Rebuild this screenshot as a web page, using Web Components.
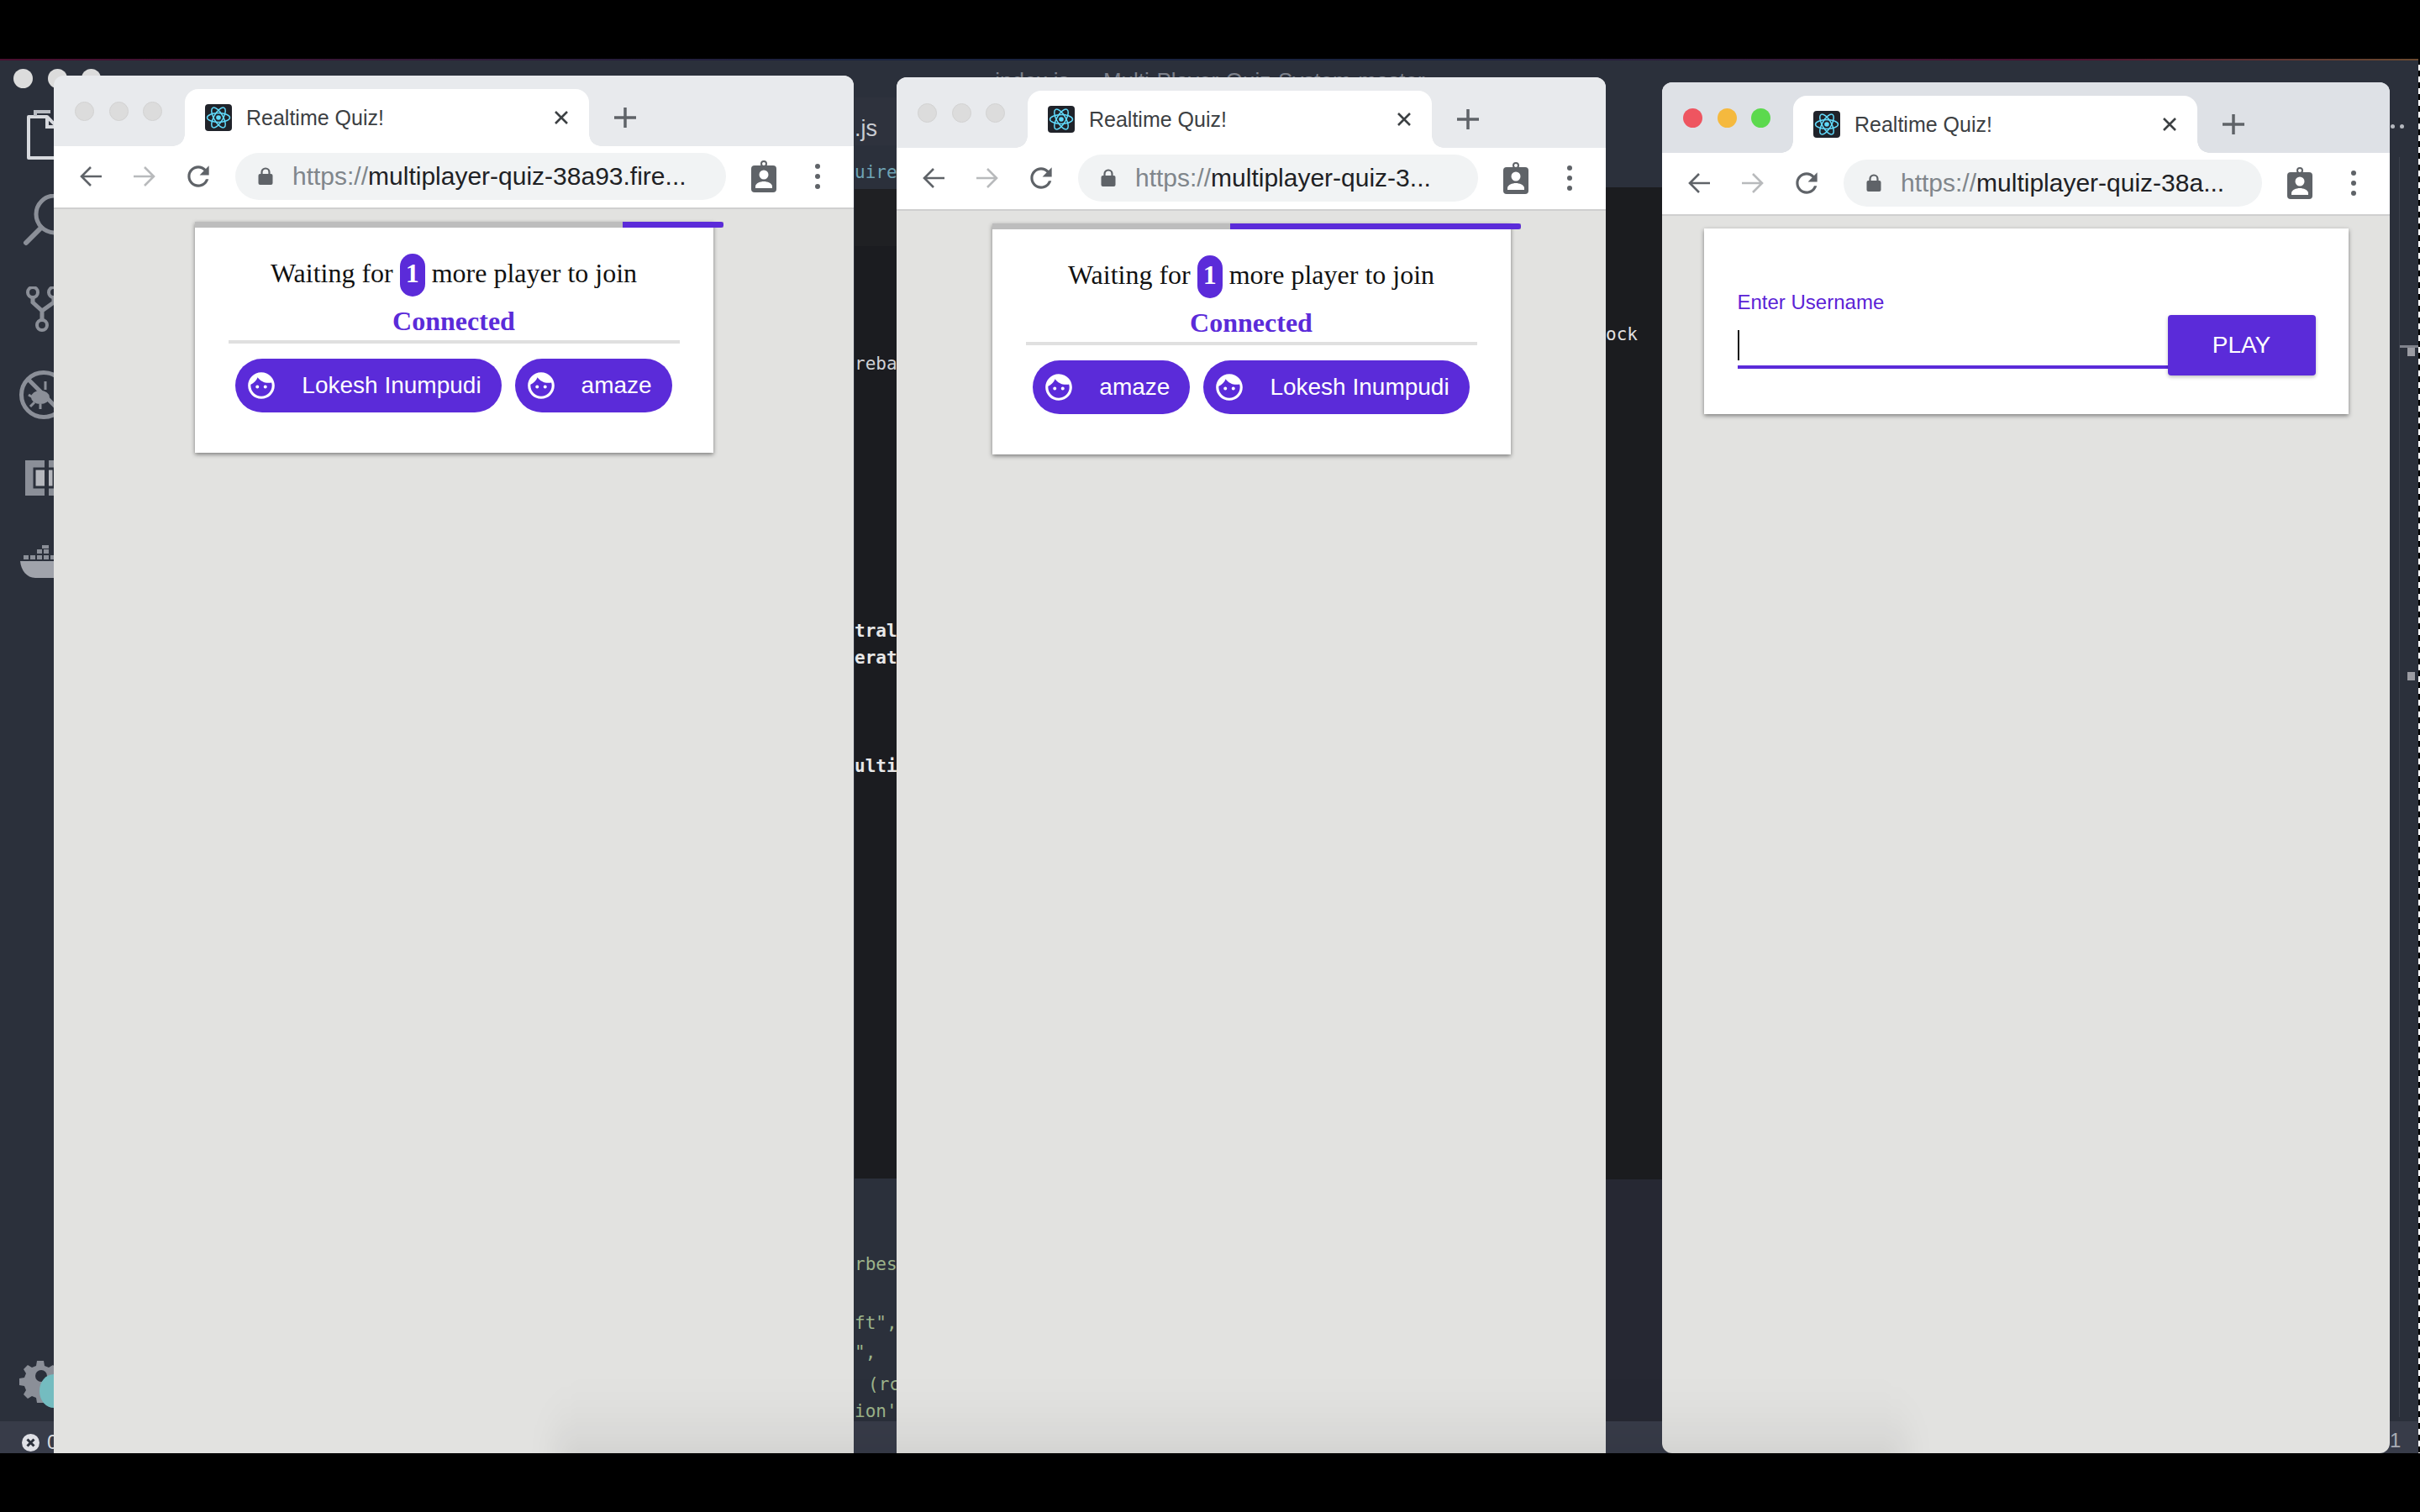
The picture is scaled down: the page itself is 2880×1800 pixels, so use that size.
<!DOCTYPE html>
<html>
<head>
<meta charset="utf-8">
<title>Realtime Quiz!</title>
<style>
    html, body { margin: 0; padding: 0; background: #000; }
</style>
</head>
<body>
<screen-frame>
    <editor-backdrop>
        <editor-activity slot="activity"></editor-activity>

        <editor-sliver slot="gap1" style="--bands: linear-gradient(#2b303b 0 46px, #2e323d 46px 103px, #2b303b 103px 155px, #1f2023 155px 223px, #1b1c20 223px 1333px, #2b303b 1333px)">
            <code-frag gap="68" sans color="#c9ccd2">.js</code-frag>
            <code-frag gap="22" color="#6fa3b4">uire</code-frag>
            <code-frag gap="198" color="#cfd1d6">reba</code-frag>
            <code-frag gap="288" color="#e8e8e8" bold>tral</code-frag>
            <code-frag gap="2" color="#e8e8e8" bold>erat</code-frag>
            <code-frag gap="99" color="#e8e8e8" bold>ulti</code-frag>
            <code-frag gap="563" color="#9cb38a">rbes</code-frag>
            <code-frag gap="40" color="#9cb38a">ft",</code-frag>
            <code-frag gap="5" color="#9cb38a">",</code-frag>
            <code-frag gap="8" color="#9cb38a" indent="16">(rc</code-frag>
            <code-frag gap="2" color="#9cb38a">ion'</code-frag>
        </editor-sliver>

        <editor-sliver slot="gap2" style="--bands: linear-gradient(#2b303b 0 153px, #1b1c1f 153px 1334px, #262833 1334px)">
            <code-frag gap="313" color="#e0e0e0">ock</code-frag>
        </editor-sliver>

        <editor-minimap slot="minimap"></editor-minimap>
    </editor-backdrop>

    <browser-window style="left:64px;top:20px;width:952px" url="multiplayer-quiz-38a93.fire...">
        <lobby-card progress="19">
            <player-chip>Lokesh Inumpudi</player-chip>
            <player-chip>amaze</player-chip>
        </lobby-card>
    </browser-window>

    <browser-window style="left:1067px;top:22px;width:844px" url="multiplayer-quiz-3...">
        <lobby-card progress="55">
            <player-chip>amaze</player-chip>
            <player-chip>Lokesh Inumpudi</player-chip>
        </lobby-card>
    </browser-window>

    <browser-window style="left:1978px;top:28px;width:866px;--bottom-radius:12px" url="multiplayer-quiz-38a..." focused>
        <login-card></login-card>
    </browser-window>
</screen-frame>

<script>
/** Screen: black bars above and below, the desktop between them */
const screenFrameTemplate = document.createElement("template");
screenFrameTemplate.innerHTML = `
    <style>
        :host {
            display: block;
            width: 2880px;
            height: 1800px;
            padding-top: 70px;
            box-sizing: border-box;
            background: #000;
            font-family: "Liberation Sans", Arial, sans-serif;
        }
        .desktop {
            position: relative;
            width: 2880px;
            height: 1660px;
            overflow: hidden;
            background: #2b303b;
        }
        .edge {
            position: absolute;
            left: 0;
            right: 0;
            top: 0;
            height: 2px;
            z-index: 3;
            background: linear-gradient(90deg, #4a1030, #1a2340 35%, #1a2340 60%, #4a1030 85%, #6a4a30);
        }
        .dock-shade {
            position: absolute;
            left: 660px;
            width: 1610px;
            top: 1575px;
            height: 130px;
            border-radius: 50px;
            background: linear-gradient(transparent, rgba(0, 0, 0, 0.02) 35%, rgba(0, 0, 0, 0.075) 75%);
            filter: blur(16px);
            z-index: 2;
            pointer-events: none;
        }
        .stripe {
            position: absolute;
            right: 0;
            top: 0;
            bottom: 0;
            width: 2px;
            z-index: 3;
            background: repeating-linear-gradient(#000 0 7px, #fff 7px 14px);
        }
    </style>
    <div class="desktop">
        <slot></slot>
        <div class="edge"></div>
        <div class="dock-shade"></div>
        <div class="stripe"></div>
    </div>
`;

class ScreenFrame extends HTMLElement {
    constructor() {
        super();
        this.attachShadow({ mode: "open" });
        this.shadowRoot.append(screenFrameTemplate.content.cloneNode(true));
    }
}

/** Code editor behind the browser windows, only its slivers show */
const editorBackdropTemplate = document.createElement("template");
editorBackdropTemplate.innerHTML = `
    <style>
        :host {
            display: grid;
            grid-template-columns: 64px 953px 50px 844px 67px 866px 36px;
            height: 1660px;
        }
        .title {
            position: absolute;
            left: 0;
            right: 0;
            top: 11px;
            text-align: center;
            font-size: 26px;
            line-height: 30px;
            color: #7d818b;
        }
        .lights {
            position: absolute;
            left: 16px;
            top: 12px;
            display: flex;
            gap: 17.5px;
        }
        .lights i {
            width: 23px;
            height: 23px;
            border-radius: 50%;
            background: #dcdcdc;
        }
        .status {
            position: absolute;
            left: 0;
            right: 0;
            top: 1622px;
            height: 38px;
            background: #383c49;
        }
        .col { position: relative; z-index: 1; min-width: 0; }
    </style>
    <div class="status"></div>
    <div class="title">index.js — Multi-Player-Quiz-System-master</div>
    <div class="lights"><i></i><i></i><i></i></div>
    <div class="col"><slot name="activity"></slot></div>
    <div class="col"></div>
    <div class="col"><slot name="gap1"></slot></div>
    <div class="col"></div>
    <div class="col"><slot name="gap2"></slot></div>
    <div class="col"></div>
    <div class="col"><slot name="minimap"></slot></div>
`;

class EditorBackdrop extends HTMLElement {
    constructor() {
        super();
        this.attachShadow({ mode: "open" });
        this.shadowRoot.append(editorBackdropTemplate.content.cloneNode(true));
    }
}

/** Left icon column of the editor, the window covers most of it */
const editorActivityTemplate = document.createElement("template");
editorActivityTemplate.innerHTML = `
    <style>
        :host {
            display: flex;
            flex-direction: column;
            width: 64px;
            height: 1660px;
            padding-top: 48px;
            box-sizing: border-box;
            overflow: hidden;
        }
        svg { display: block; flex: none; width: 64px; }
        .status {
            margin-top: auto;
            height: 38px;
            display: flex;
            align-items: center;
            gap: 9px;
            padding: 12px 0 0 26px;
            box-sizing: border-box;
            font-size: 24px;
            color: #d7d9de;
            background: #383c49;
        }
        .status svg { width: 21px; }
    </style>
    <svg viewBox="0 0 64 60" height="60" style="margin-top:12px">
        <path d="M34 9h22l12 12v37H34z" fill="none" stroke="#d7d9de" stroke-width="4" stroke-linejoin="round"/>
        <path d="M42 8V3h18" fill="none" stroke="#b9bcc3" stroke-width="4"/>
        <path d="M56 9v12h12" fill="none" stroke="#d7d9de" stroke-width="4"/>
    </svg>
    <svg viewBox="0 0 64 62" height="62" style="margin-top:41px">
        <circle cx="65" cy="24" r="22" fill="none" stroke="#8b8f98" stroke-width="5"/>
        <path d="M49 40L31 58" stroke="#8b8f98" stroke-width="6" stroke-linecap="round"/>
    </svg>
    <svg viewBox="0 0 64 54" height="54" style="margin-top:48px">
        <circle cx="39" cy="7" r="6" fill="none" stroke="#8b8f98" stroke-width="4"/>
        <circle cx="64" cy="7" r="6" fill="none" stroke="#8b8f98" stroke-width="4"/>
        <circle cx="50" cy="46" r="6" fill="none" stroke="#8b8f98" stroke-width="4"/>
        <path d="M39 13v6l11 10v11M64 13v6L50 29" fill="none" stroke="#8b8f98" stroke-width="5"/>
    </svg>
    <svg viewBox="0 0 64 60" height="60" style="margin-top:45px">
        <circle cx="52" cy="30" r="26.5" fill="none" stroke="#8b8f98" stroke-width="5"/>
        <path d="M33 11L71 49" stroke="#8b8f98" stroke-width="5"/>
        <ellipse cx="48" cy="33" rx="11" ry="8" fill="#8b8f98"/>
        <path d="M34 30l5 3M36 44l5-5M48 47v-6M54 14v10" stroke="#8b8f98" stroke-width="3" fill="none"/>
    </svg>
    <svg viewBox="0 0 64 44" height="44" style="margin-top:47px">
        <rect x="30" y="1" width="34" height="42" fill="#8b8f98"/>
        <rect x="41" y="11" width="23" height="22" fill="#b5b7bd" stroke="#2b303b" stroke-width="3"/>
        <rect x="53" y="0" width="5" height="44" fill="#2b303b"/>
    </svg>
    <svg viewBox="0 0 64 40" height="40" style="margin-top:58px">
        <path d="M24 19h40v20H42C32 39 25 30 24 19z" fill="#a0a3ab"/>
        <path d="M28 12h6v5h-6zM36 12h6v5h-6zM44 12h6v5h-6zM52 12h6v5h-6zM44 5h6v5h-6zM52 5h6v5h-6zM50 0h8v4h-8zM60 12h4v5h-4z" fill="#8b8f98"/>
    </svg>
    <svg viewBox="0 0 64 60" height="60" style="margin-top:auto">
        <path d="M44 2h8l1 6 5 2 5-3 5 5-3 5 2 5 6 1v8l-6 1-2 5 3 5-5 5-5-3-5 2-1 6h-8l-1-6-5-2-5 3-5-5 3-5-2-5-6-1v-8l6-1 2-5-3-5 5-5 5 3 5-2z" fill="#8b8f98"/>
        <circle cx="49" cy="20" r="7" fill="#2b303b"/>
        <ellipse cx="64" cy="38" rx="17" ry="20" fill="#74bcc0"/>
    </svg>
    <div class="status" style="margin-top:14px">
        <svg viewBox="0 0 21 21" height="21">
            <circle cx="10.5" cy="10.5" r="10.5" fill="#dfe0e6"/>
            <path d="M6.5 6.5l8 8M14.5 6.5l-8 8" stroke="#2b303b" stroke-width="3"/>
        </svg>
        <span>0</span>
    </div>
`;

class EditorActivity extends HTMLElement {
    constructor() {
        super();
        this.attachShadow({ mode: "open" });
        this.shadowRoot.append(editorActivityTemplate.content.cloneNode(true));
    }
}

/** A strip of the editor seen between two windows */
const editorSliverTemplate = document.createElement("template");
editorSliverTemplate.innerHTML = `
    <style>
        :host {
            display: flex;
            flex-direction: column;
            height: 1622px;
            overflow: hidden;
            background: var(--bands, #1b1c20);
            box-sizing: border-box;
        }
    </style>
    <slot></slot>
`;

class EditorSliver extends HTMLElement {
    constructor() {
        super();
        this.attachShadow({ mode: "open" });
        this.shadowRoot.append(editorSliverTemplate.content.cloneNode(true));
    }
}

/** One visible piece of a code line */
const codeFragTemplate = document.createElement("template");
codeFragTemplate.innerHTML = `
    <style>
        :host {
            display: block;
            flex: none;
            height: 30px;
            line-height: 30px;
            white-space: nowrap;
            font-family: "DejaVu Sans Mono", monospace;
            font-size: 21px;
        }
        :host([sans]) { font-family: "Liberation Sans", sans-serif; font-size: 27px; }
        :host([bold]) { font-weight: 700; }
    </style>
    <slot></slot>
`;

class CodeFrag extends HTMLElement {
    constructor() {
        super();
        this.attachShadow({ mode: "open" });
        this.shadowRoot.append(codeFragTemplate.content.cloneNode(true));
    }

    connectedCallback() {
        this.style.marginTop = (this.getAttribute("gap") || 0) + "px";
        this.style.paddingLeft = (this.getAttribute("indent") || 0) + "px";
        this.style.color = this.getAttribute("color");
    }
}

/** Minimap strip on the right of the editor */
const editorMinimapTemplate = document.createElement("template");
editorMinimapTemplate.innerHTML = `
    <style>
        :host {
            display: block;
            height: 1660px;
            position: relative;
            overflow: hidden;
        }
        .dots { display: flex; gap: 6px; padding: 78px 0 0 1px; }
        .dots i { width: 5px; height: 5px; border-radius: 50%; background: #b5b8bf; }
        .map {
            margin: 34px 0 0 11px;
            padding-top: 224px;
            height: 1276px;
            border-left: 1px solid #3a3f4a;
        }
        .bar { height: 3px; background: #7f828b; }
        .sq { width: 9px; height: 10px; margin-left: 9px; background: #9b9ca3; }
        .sq.low { margin-top: 376px; }
        .one { position: absolute; left: 0; top: 1630px; font-size: 24px; line-height: 30px; color: #a9acb5; }
    </style>
    <div class="dots"><i></i><i></i></div>
    <div class="map">
        <div class="bar"></div>
        <div class="sq"></div>
        <div class="sq low"></div>
    </div>
    <div class="one">1</div>
`;

class EditorMinimap extends HTMLElement {
    constructor() {
        super();
        this.attachShadow({ mode: "open" });
        this.shadowRoot.append(editorMinimapTemplate.content.cloneNode(true));
    }
}

/** Browser window: tab strip, toolbar and page */
const browserWindowTemplate = document.createElement("template");
browserWindowTemplate.innerHTML = `
    <style>
        :host {
            position: absolute;
            bottom: 0;
            z-index: 1;
            display: flex;
            flex-direction: column;
            overflow: hidden;
            border-radius: 12px 12px var(--bottom-radius, 0) var(--bottom-radius, 0);
            background: #e2e2e0;
            font-family: "Liberation Sans", Arial, sans-serif;
            --strip: #e8eaed;
            --light-red: #dcdcdc;
            --light-yellow: #dcdcdc;
            --light-green: #dcdcdc;
            --light-edge: #d2d2d2;
        }
        :host([focused]) {
            --strip: #dee1e6;
            --light-red: #ee5560;
            --light-yellow: #f5b93e;
            --light-green: #5cd94e;
            --light-edge: transparent;
        }
        .strip {
            flex: none;
            display: flex;
            align-items: flex-start;
            height: 84px;
            padding-top: 16px;
            box-sizing: border-box;
            background: var(--strip);
        }
        .lights {
            flex: none;
            display: flex;
            gap: 17.5px;
            width: 156px;
            padding: 15px 0 0 25px;
            box-sizing: border-box;
        }
        .lights i {
            width: 23px;
            height: 23px;
            border-radius: 50%;
            box-sizing: border-box;
            border: 1px solid var(--light-edge);
        }
        .tab {
            position: relative;
            flex: none;
            display: flex;
            align-items: center;
            width: 481px;
            height: 68px;
            padding: 0 24px 0 24px;
            box-sizing: border-box;
            border-radius: 16px 16px 0 0;
            background: #fff;
        }
        .tab::before, .tab::after {
            content: "";
            position: absolute;
            bottom: 0;
            width: 14px;
            height: 14px;
        }
        .tab::before {
            left: -14px;
            background: radial-gradient(circle at 0 0, transparent 13.5px, #fff 14px);
        }
        .tab::after {
            right: -14px;
            background: radial-gradient(circle at 100% 0, transparent 13.5px, #fff 14px);
        }
        .favicon { flex: none; width: 32px; height: 32px; }
        .tab-title {
            margin-left: 17px;
            font-size: 25px;
            color: #3c4043;
            white-space: nowrap;
        }
        .close { flex: none; margin-left: auto; margin-right: 0; width: 18px; height: 16px; }
        .plus { flex: none; width: 26px; height: 24px; margin: 22px 0 0 30px; }
        .toolbar {
            flex: none;
            display: flex;
            align-items: center;
            height: 75px;
            padding: 0 11px 2px 12px;
            box-sizing: border-box;
            background: #fff;
            border-bottom: 2px solid #cfcfcf;
        }
        .cell {
            flex: none;
            width: 64px;
            display: flex;
            justify-content: center;
        }
        .omnibox {
            flex: 1;
            min-width: 0;
            display: flex;
            align-items: center;
            height: 56px;
            margin: 0 13px 0 12px;
            padding-left: 27px;
            box-sizing: border-box;
            border-radius: 28px;
            background: #f1f3f4;
            font-size: 30px;
            white-space: nowrap;
            overflow: hidden;
        }
        .lock { flex: none; width: 18px; height: 21px; margin-right: 23px; }
        .scheme { color: #80868b; }
        .host { color: #202124; }
        .page {
            flex: 1;
            display: flex;
            flex-direction: column;
            align-items: center;
            padding-top: 15px;
            min-height: 0;
        }
    </style>
    <div class="strip">
        <div class="lights">
            <i style="background:var(--light-red)"></i>
            <i style="background:var(--light-yellow)"></i>
            <i style="background:var(--light-green)"></i>
        </div>
        <div class="tab">
            <svg class="favicon" viewBox="0 0 32 32">
                <rect width="32" height="32" rx="4" fill="#20232a"/>
                <g fill="none" stroke="#61dafb" stroke-width="1.5">
                    <ellipse cx="16" cy="16" rx="13.5" ry="5.4"/>
                    <ellipse cx="16" cy="16" rx="13.5" ry="5.4" transform="rotate(60 16 16)"/>
                    <ellipse cx="16" cy="16" rx="13.5" ry="5.4" transform="rotate(120 16 16)"/>
                </g>
                <circle cx="16" cy="16" r="2.8" fill="#61dafb"/>
            </svg>
            <span class="tab-title">Realtime Quiz!</span>
            <svg class="close" viewBox="0 0 18 16">
                <path d="M2 1l14 14M16 1L2 15" stroke="#3c4043" stroke-width="2.6"/>
            </svg>
        </div>
        <svg class="plus" viewBox="0 0 26 24">
            <path d="M13 0v24M0 12h26" stroke="#5f6368" stroke-width="3.5"/>
        </svg>
    </div>
    <div class="toolbar">
        <div class="cell">
            <svg width="28" height="26" viewBox="0 0 28 26">
                <path d="M14 2L3 13l11 11M3 13h24" fill="none" stroke="#5f6368" stroke-width="2.6"/>
            </svg>
        </div>
        <div class="cell">
            <svg width="28" height="26" viewBox="0 0 28 26">
                <path d="M14 2l11 11-11 11M25 13H1" fill="none" stroke="#b8babc" stroke-width="2.6"/>
            </svg>
        </div>
        <div class="cell">
            <svg width="38" height="38" viewBox="0 0 24 24">
                <path fill="#5f6368" d="M17.65 6.35C16.2 4.9 14.21 4 12 4c-4.42 0-7.99 3.58-7.99 8s3.57 8 7.99 8c3.73 0 6.84-2.55 7.73-6h-2.08c-.82 2.33-3.04 4-5.65 4-3.31 0-6-2.69-6-6s2.69-6 6-6c1.66 0 3.14.69 4.22 1.78L13 11h7V4l-2.35 2.35z"/>
            </svg>
        </div>
        <div class="omnibox">
            <svg class="lock" viewBox="0 0 18 21">
                <path d="M4.5 9V6a4.5 4.5 0 0 1 9 0v3" fill="none" stroke="#5f6368" stroke-width="2.2"/>
                <rect x="0.5" y="8" width="17" height="13" rx="2" fill="#5f6368"/>
            </svg>
            <span><span class="scheme">https://</span><span class="host"></span></span>
        </div>
        <div class="cell">
            <svg width="30" height="38" viewBox="0 0 30 38">
                <rect x="0" y="6" width="30" height="32" rx="4" fill="#5f6368"/>
                <circle cx="15" cy="4" r="3" fill="none" stroke="#5f6368" stroke-width="2"/>
                <circle cx="15" cy="17" r="5.5" fill="#fff"/>
                <path d="M5 33v-2c0-4 6-6 10-6s10 2 10 6v2z" fill="#fff"/>
            </svg>
        </div>
        <div class="cell">
            <svg width="8" height="32" viewBox="0 0 8 32">
                <circle cx="4" cy="4" r="3" fill="#5f6368"/>
                <circle cx="4" cy="16" r="3" fill="#5f6368"/>
                <circle cx="4" cy="28" r="3" fill="#5f6368"/>
            </svg>
        </div>
    </div>
    <div class="page"><slot></slot></div>
`;

class BrowserWindow extends HTMLElement {
    constructor() {
        super();
        this.attachShadow({ mode: "open" });
        this.shadowRoot.append(browserWindowTemplate.content.cloneNode(true));
    }

    connectedCallback() {
        this.shadowRoot.querySelector(".host").textContent = this.getAttribute("url");
    }
}

/** Waiting room card, the slotted chips are the players */
const lobbyCardTemplate = document.createElement("template");
lobbyCardTemplate.innerHTML = `
    <style>
        :host {
            display: block;
            flex: none;
            width: 617px;
            background: #fff;
            box-shadow: 0 2px 5px rgba(0, 0, 0, 0.45);
            color: #111;
            font-family: "Liberation Serif", "Times New Roman", serif;
            --purple: #5b2bd9;
        }
        .progress {
            width: 102%;
            height: 7px;
            background: #bdbdbd;
            display: flex;
            justify-content: flex-end;
        }
        .progress i {
            display: block;
            height: 100%;
            border-radius: 0 3px 3px 0;
            background: var(--purple);
        }
        .body { padding: 31px 40px 48px 40px; text-align: center; }
        .waiting {
            font-size: 32px;
            height: 51px;
            line-height: 47px;
        }
        .badge {
            display: inline-block;
            height: 51px;
            line-height: 47px;
            padding: 0 7px;
            box-sizing: border-box;
            border-radius: 15px;
            background: var(--purple);
            color: #fff;
            font-weight: 700;
        }
        .status {
            margin-top: 9px;
            font-size: 32px;
            line-height: 40px;
            font-weight: 700;
            color: var(--purple);
        }
        hr {
            margin: 3px 0 0 0;
            height: 4px;
            border: 0;
            background: #e0e0e0;
        }
        .players {
            display: flex;
            justify-content: center;
            gap: 16px;
            margin-top: 18px;
        }
    </style>
    <div class="progress"><i></i></div>
    <div class="body">
        <div class="waiting">Waiting for <span class="badge">1</span> more player to join</div>
        <div class="status">Connected</div>
        <hr>
        <div class="players"><slot></slot></div>
    </div>
`;

class LobbyCard extends HTMLElement {
    constructor() {
        super();
        this.attachShadow({ mode: "open" });
        this.shadowRoot.append(lobbyCardTemplate.content.cloneNode(true));
    }

    connectedCallback() {
        this.shadowRoot.querySelector(".progress i").style.width = this.getAttribute("progress") + "%";
    }
}

/** Player name pill */
const playerChipTemplate = document.createElement("template");
playerChipTemplate.innerHTML = `
    <style>
        :host {
            display: inline-flex;
            align-items: center;
            height: 64px;
            padding: 0 24px 0 12px;
            border-radius: 32px;
            background: #5b2bd9;
            color: #fff;
            font-family: "Liberation Sans", Arial, sans-serif;
            font-size: 28px;
            white-space: nowrap;
        }
        svg { flex: none; width: 38px; height: 38px; margin-right: 29px; }
    </style>
    <svg viewBox="0 0 24 24">
        <path fill="#fff" d="M9 11.75c-.69 0-1.25.56-1.25 1.25s.56 1.25 1.25 1.25 1.25-.56 1.25-1.25-.56-1.25-1.25-1.25zm6 0c-.69 0-1.25.56-1.25 1.25s.56 1.25 1.25 1.25 1.25-.56 1.25-1.25-.56-1.25-1.25-1.25zM12 2C6.48 2 2 6.48 2 12s4.48 10 10 10 10-4.48 10-10S17.52 2 12 2zm0 18c-4.41 0-8-3.59-8-8 0-.29.02-.58.05-.86 2.36-1.05 4.23-2.98 5.21-5.37C11.07 8.33 14.05 10 17.42 10c.78 0 1.53-.09 2.25-.26.21.71.33 1.47.33 2.26 0 4.41-3.59 8-8 8z"/>
    </svg>
    <slot></slot>
`;

class PlayerChip extends HTMLElement {
    constructor() {
        super();
        this.attachShadow({ mode: "open" });
        this.shadowRoot.append(playerChipTemplate.content.cloneNode(true));
    }
}

/** Username form with the play button */
const loginCardTemplate = document.createElement("template");
loginCardTemplate.innerHTML = `
    <style>
        :host {
            display: flex;
            align-items: flex-end;
            flex: none;
            width: 767px;
            height: 221px;
            padding: 74px 39px 46px 40px;
            box-sizing: border-box;
            background: #fff;
            box-shadow: 0 2px 5px rgba(0, 0, 0, 0.45);
            font-family: "Liberation Sans", Arial, sans-serif;
        }
        .field { flex: 1; min-width: 0; margin-bottom: 8px; }
        label {
            display: block;
            font-size: 24px;
            line-height: 28px;
            color: #5b22d6;
        }
        .input {
            margin-top: 19px;
            height: 42px;
            border-bottom: 4px solid #5b2bd9;
        }
        .caret { display: block; width: 2px; height: 36px; background: #111; }
        button {
            flex: none;
            width: 176px;
            height: 72px;
            border: 0;
            border-radius: 4px;
            background: #5b2bd9;
            color: #fff;
            font-family: inherit;
            font-size: 28px;
            box-shadow: 0 2px 4px rgba(0, 0, 0, 0.25);
        }
    </style>
    <div class="field">
        <label>Enter Username</label>
        <div class="input"><span class="caret"></span></div>
    </div>
    <button>PLAY</button>
`;

class LoginCard extends HTMLElement {
    constructor() {
        super();
        this.attachShadow({ mode: "open" });
        this.shadowRoot.append(loginCardTemplate.content.cloneNode(true));
    }
}

customElements.define("screen-frame", ScreenFrame);
customElements.define("editor-backdrop", EditorBackdrop);
customElements.define("editor-activity", EditorActivity);
customElements.define("editor-sliver", EditorSliver);
customElements.define("code-frag", CodeFrag);
customElements.define("editor-minimap", EditorMinimap);
customElements.define("browser-window", BrowserWindow);
customElements.define("lobby-card", LobbyCard);
customElements.define("player-chip", PlayerChip);
customElements.define("login-card", LoginCard);
</script>
</body>
</html>
